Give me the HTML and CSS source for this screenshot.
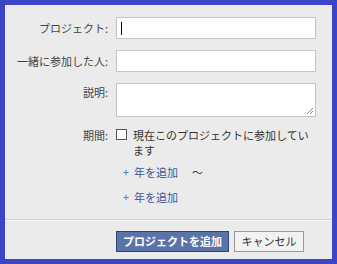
FILE: index.html
```html
<!DOCTYPE html>
<html lang="ja">
<head>
<meta charset="utf-8">
<link rel="stylesheet" href="styles.css">
</head>
<body>
<div class="frame">
  <div class="form">
    <div class="row">
      <label class="label">プロジェクト:</label>
      <div class="field"><div class="input focused"><span class="caret"></span></div></div>
    </div>
    <div class="row">
      <label class="label">一緒に参加した人:</label>
      <div class="field"><div class="input"></div></div>
    </div>
    <div class="row row-top">
      <label class="label label-ta">説明:</label>
      <div class="field"><div class="textarea"><svg class="grip" width="8" height="8" viewBox="0 0 8 8"><path d="M7 1L1 7M7 4L4 7" stroke="#8a8a8a" stroke-width="1"/></svg></div></div>
    </div>
    <div class="row row-top period">
      <label class="label label-cb">期間:</label>
      <div class="field">
        <div class="check-line"><span class="checkbox"></span><span class="check-text">現在このプロジェクトに参加してい<br>ます</span></div>
        <div class="add-line first"><span class="plus">+</span><span class="link">年を追加</span><span class="tilde">〜</span></div>
        <div class="add-line"><span class="plus">+</span><span class="link">年を追加</span></div>
      </div>
    </div>
  </div>
  <div class="footer">
    <button class="btn btn-primary">プロジェクトを追加</button>
    <button class="btn btn-cancel">キャンセル</button>
  </div>
</div>
</body>
</html>
```
FILE: styles.css
```css
html, body {
  margin: 0;
  padding: 0;
  background: #3c44c8;
}
body {
  font-family: "Noto Sans CJK JP", "Noto Sans", sans-serif;
  font-size: 11px;
  color: #333;
}
.frame {
  width: 337px;
  height: 264px;
  box-sizing: border-box;
  border: 5px solid #3c44c8;
  background: #ebebeb;
  display: flex;
  flex-direction: column;
}
.form {
  padding-top: 12px;
  height: 215px;
  flex: none;
  box-sizing: border-box;
  border-bottom: 1px solid #d4d4d4;
}
.row {
  display: grid;
  grid-template-columns: 103px 200px;
  column-gap: 8px;
  align-items: center;
  margin-bottom: 11px;
}
.row-top { align-items: start; }
.label {
  text-align: right;
  color: #444;
  line-height: 14px;
}
.label-ta { padding-top: 2px; }
.label-cb { padding-top: 0px; }
.input {
  height: 22px;
  box-sizing: border-box;
  border: 1px solid #c4c4c4;
  background: #fff;
  position: relative;
}
.caret {
  position: absolute;
  left: 4px;
  top: 4px;
  width: 1px;
  height: 13px;
  background: #000;
}
.textarea {
  height: 34px;
  box-sizing: border-box;
  border: 1px solid #c4c4c4;
  background: #fff;
  position: relative;
}
.grip {
  position: absolute;
  right: 1px;
  bottom: 1px;
}
.period { margin-top: 3px; }
.check-line {
  display: flex;
  align-items: flex-start;
  line-height: 15px;
}
.checkbox {
  width: 11px;
  height: 11px;
  box-sizing: border-box;
  border: 1px solid #555;
  background: #fff;
  margin-top: 1px;
  margin-right: 6px;
  flex: none;
}
.check-text { color: #333; }
.add-line {
  display: flex;
  align-items: center;
  height: 15px;
  padding-left: 7px;
}
.add-line.first { margin-top: 6px; margin-bottom: 10px; }
.plus {
  color: #6d84b4;
  font-weight: bold;
  font-size: 10px;
  margin-right: 5px;
}
.link { color: #3b5998; }
.tilde { margin-left: 14px; color: #333; }
.footer {
  border-top: 1px solid #f5f5f5;
  display: flex;
  gap: 5px;
  padding-left: 111px;
  padding-top: 10px;
}
.btn {
  height: 21px;
  box-sizing: border-box;
  font-family: "Noto Sans CJK JP", "Noto Sans", sans-serif;
  font-size: 11px;
  padding: 0;
  line-height: 17px;
}
.btn-primary {
  width: 113px;
  background: #5b74a8;
  border: 1px solid #29447e;
  color: #fff;
  font-weight: bold;
}
.btn-cancel {
  width: 70px;
  background: #f2f2f2;
  border: 1px solid #999;
  color: #333;
}
```
